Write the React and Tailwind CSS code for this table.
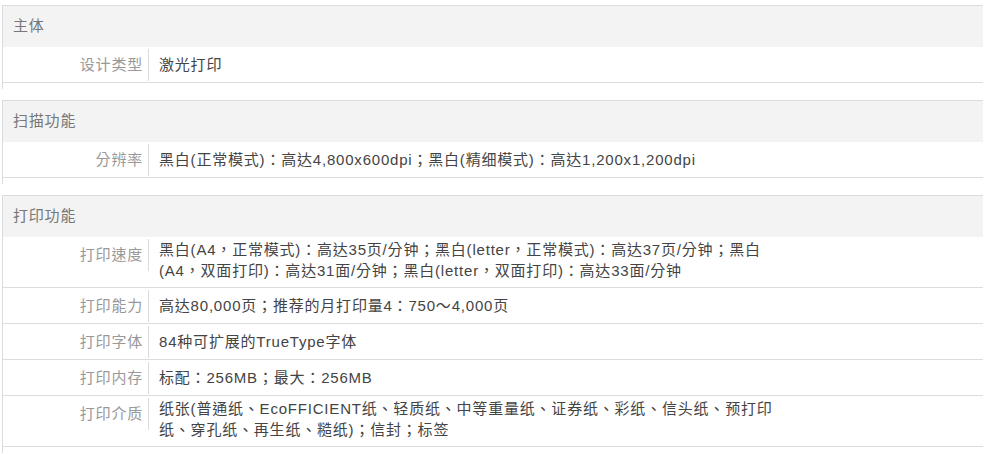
import React from "react";

const sections = [
  {
    title: "主体",
    rows: [{ label: "设计类型", value: ["激光打印"] }],
  },
  {
    title: "扫描功能",
    rows: [
      {
        label: "分辨率",
        value: ["黑白(正常模式)：高达4,800x600dpi；黑白(精细模式)：高达1,200x1,200dpi"],
      },
    ],
  },
  {
    title: "打印功能",
    rows: [
      {
        label: "打印速度",
        value: [
          "黑白(A4，正常模式)：高达35页/分钟；黑白(letter，正常模式)：高达37页/分钟；黑白",
          "(A4，双面打印)：高达31面/分钟；黑白(letter，双面打印)：高达33面/分钟",
        ],
      },
      { label: "打印能力", value: ["高达80,000页；推荐的月打印量4：750～4,000页"] },
      { label: "打印字体", value: ["84种可扩展的TrueType字体"] },
      { label: "打印内存", value: ["标配：256MB；最大：256MB"] },
      {
        label: "打印介质",
        value: [
          "纸张(普通纸、EcoFFICIENT纸、轻质纸、中等重量纸、证券纸、彩纸、信头纸、预打印",
          "纸、穿孔纸、再生纸、糙纸)；信封；标签",
        ],
      },
    ],
  },
];

export default function App() {
  return (
    <div
      className="w-[988px] h-[454px] overflow-hidden bg-white pt-[5px] pl-[2px] text-[15px] tracking-[0.8px]"
      style={{ fontFamily: '"Liberation Sans", "Noto Sans CJK TC", "Noto Sans CJK SC", sans-serif' }}
    >
      <div className="w-[981px] flex flex-col gap-[11px]">
        {sections.map((s) => (
          <div key={s.title} className="border-l border-t border-[#dcdcdc] pb-[6px]">
            <div className="h-[41px] bg-[#f3f3f3] flex items-center pl-[10px] text-[#777]">
              {s.title}
            </div>
            {s.rows.map((r) => (
              <div key={r.label} className="flex border-b border-[#dcdcdc]">
                <div className="w-[146px] shrink-0 mt-[2px] mb-[1px] h-[32px] leading-[32px] border-r border-[#dcdcdc] text-right pr-[5px] text-[#999]">
                  {r.label}
                </div>
                <div
                  className={
                    r.value.length > 1
                      ? "flex-1 self-start pl-[10px] pt-[2px] pb-[6px] leading-[21px] text-[#444] whitespace-nowrap"
                      : "flex-1 self-center pl-[10px] leading-[21px] text-[#444] whitespace-nowrap"
                  }
                >
                  {r.value.map((v, i) => (
                    <div key={i}>{v}</div>
                  ))}
                </div>
              </div>
            ))}
          </div>
        ))}
      </div>
    </div>
  );
}
